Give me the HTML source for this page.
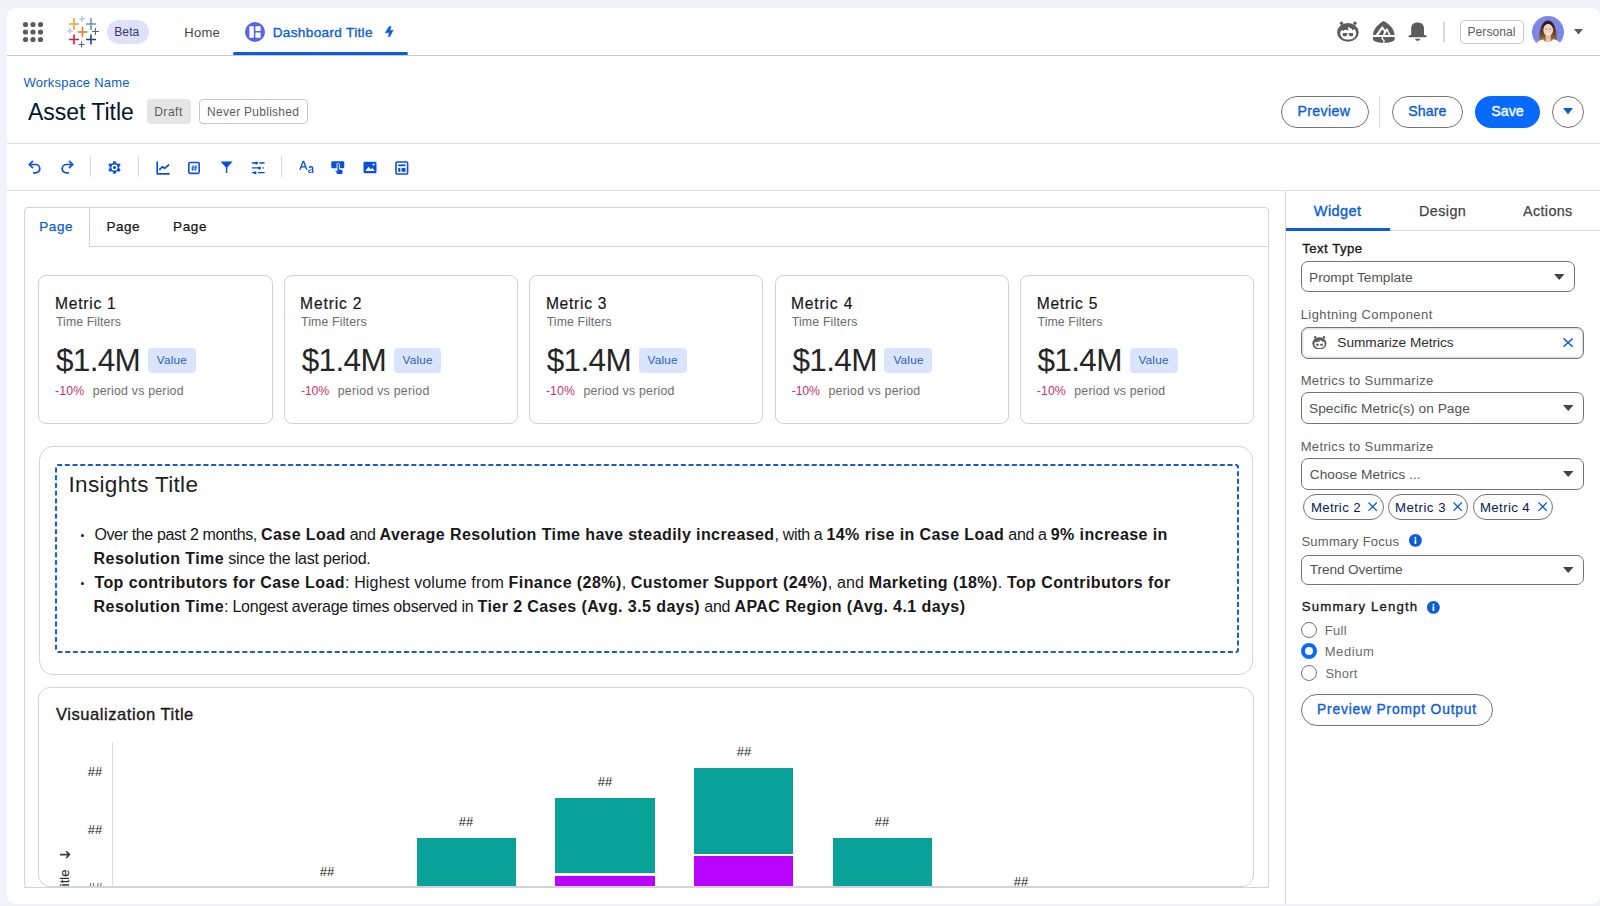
<!DOCTYPE html>
<html><head><meta charset="utf-8">
<style>
*{box-sizing:border-box;margin:0;padding:0}
html,body{width:1600px;height:906px;overflow:hidden;background:#f1f2fb;font-family:"Liberation Sans",sans-serif;color:#181818}
.abs{position:absolute}
.t{position:absolute;white-space:nowrap;line-height:1}
b{font-weight:bold}
</style></head><body>
<div class="abs" style="left:7px;top:8px;width:1592.5px;height:896px;background:#fff;border-radius:9px"></div>
<div class="abs" style="left:7px;top:55px;width:1593px;height:1.2px;background:#c9c9c9"></div>
<div class="abs" style="left:7px;top:142.5px;width:1593px;height:1.5px;background:#e0e0e0"></div>
<div class="abs" style="left:7px;top:189.5px;width:1593px;height:1.5px;background:#e0e0e0"></div>
<svg class="abs" style="left:20px;top:19px" width="26" height="26" viewBox="0 0 26 26" fill="#5c5c5c">
<circle cx="5.5" cy="5.5" r="2.6"/><circle cx="13" cy="5.5" r="2.6"/><circle cx="20.5" cy="5.5" r="2.6"/>
<circle cx="5.5" cy="13" r="2.6"/><circle cx="13" cy="13" r="2.6"/><circle cx="20.5" cy="13" r="2.6"/>
<circle cx="5.5" cy="20.5" r="2.6"/><circle cx="13" cy="20.5" r="2.6"/><circle cx="20.5" cy="20.5" r="2.6"/>
</svg>
<svg class="abs" style="left:62px;top:12px" width="40" height="40" viewBox="62 12 40 40">
<path d="M74 18v12M69 24h10" stroke="#e8a33a" stroke-width="1.6"/>
<path d="M82 16v6M79 19h6" stroke="#9ebfc6" stroke-width="1.05"/>
<path d="M91 18v12M86 24h10" stroke="#6c95a6" stroke-width="1.6"/>
<path d="M70 28v6M67 31h6" stroke="#a6c6cc" stroke-width="1.05"/>
<path d="M82.5 27v10M77.5 32h10" stroke="#e8762d" stroke-width="1.6"/>
<path d="M95.5 28v7M92 31.5h7" stroke="#5b5e96" stroke-width="1.05"/>
<path d="M74 34.5v10M69 39.5h10" stroke="#d2203c" stroke-width="1.6"/>
<path d="M91 34.5v10M86 39.5h10" stroke="#1f457e" stroke-width="1.6"/>
<path d="M81.5 41.5v6M78.5 44.5h6" stroke="#5b5e96" stroke-width="1.05"/>
</svg>
<div class="abs" style="left:106.5px;top:20px;width:42px;height:24px;border-radius:12px;background:#dfe3f8"></div>
<div id="beta" class="t" style="left:114.20px;top:26.34px;font-size:12px;color:#3b2f7e;font-weight:normal;letter-spacing:0.133px;">Beta</div>
<div id="home" class="t" style="left:184.32px;top:25.80px;font-size:13px;color:#444;font-weight:normal;letter-spacing:0.267px;">Home</div>
<svg class="abs" style="left:245px;top:22px" width="20" height="20" viewBox="0 0 20 20">
<circle cx="10" cy="10" r="10" fill="#5867e8"/>
<rect x="4.4" y="4.2" width="4.4" height="11.6" rx="0.6" fill="#fff"/>
<rect x="10.4" y="4.2" width="5.3" height="4.7" rx="0.6" fill="#fff"/>
<rect x="10.4" y="10.5" width="5.3" height="5.3" rx="0.6" fill="#fff"/>
</svg>
<div id="dash" class="t" style="left:272.70px;top:25.79px;font-size:13.6px;color:#0b5cd5;font-weight:normal;letter-spacing:0.329px;-webkit-text-stroke:0.35px currentColor">Dashboard Title</div>
<svg class="abs" style="left:384px;top:25px" width="10" height="13" viewBox="384 25 10 13"><path d="M389.2 26.6h1.9l-1.2 3.7h3.3l-3.7 6.7h-1l.8-4.2h-4.1z" fill="#0b5cd5" stroke="#0b5cd5" stroke-width="0.5" stroke-linejoin="round"/></svg>
<div class="abs" style="left:233px;top:51.7px;width:175px;height:3.3px;border-radius:2px;background:#0b5cd5"></div>
<svg class="abs" style="left:1334px;top:18px" width="28" height="28" viewBox="0 0 28 28">
<ellipse cx="13.9" cy="14.45" rx="10.8" ry="9.35" fill="#5c5c5c"/>
<circle cx="7.5" cy="5.2" r="1.7" fill="#5c5c5c"/><circle cx="20.9" cy="5.2" r="1.7" fill="#5c5c5c"/>
<path d="M6.3 15.5C6.3 13.5 7 12.3 8.3 12L9.4 13C10.5 11.6 12.5 11.3 14.6 12.6 14.6 11.2 14.2 10 13.8 9 16.5 9.6 18 11 18.6 12.4 19.4 11.6 20 11 20.6 11.2 21.6 12.5 22.1 14 22.1 15.5 22.1 19.3 18.6 21.6 14.2 21.6S6.3 19.3 6.3 15.5z" fill="#fff"/>
<rect x="8.65" y="15.1" width="4.35" height="3.1" rx="1.1" fill="#5c5c5c"/><rect x="15.1" y="15.1" width="4.1" height="3.1" rx="1.1" fill="#5c5c5c"/>
<path d="M12.5 15.9h3" stroke="#5c5c5c" stroke-width="0.6"/>
</svg>
<svg class="abs" style="left:1368px;top:16px" width="32" height="30" viewBox="0 0 32 30">
<path d="M15.7 4.9C10.5 7.5 5.3 12.5 5 18.9h21.6C26.2 12.5 21 7.5 15.7 4.9z" fill="#5c5c5c"/>
<path d="M5 20.9h21.7v2.6C26.2 25.5 21 26.9 15.8 26.9S5.4 25.5 5 23.5z" fill="#5c5c5c"/>
<path d="M7.6 18.9L14.2 10.1 17.2 14.1 19 11.9 22.6 18.9z" fill="#fff"/>
<path d="M10.6 18.9L14.2 13.3 16.1 15.6 14.9 18.9z" fill="#5c5c5c"/>
<path d="M16.8 18.9L19 15.1 20.7 18.9z" fill="#5c5c5c"/>
<path d="M14.6 20.6l-.4 2 1.8 2-.1 2.6" fill="none" stroke="#fff" stroke-width="1.3"/>
</svg>
<svg class="abs" style="left:1408px;top:21px" width="20" height="21" viewBox="0 0 20 21">
<path d="M3.2 13.8V7.6C3.2 3.6 5.8 1.6 9.6 1.6S16 3.6 16 7.6v6.2l2.6 1v1.5H0.6v-1.5z" fill="#5c5c5c"/>
<path d="M7 17.8h5.2c-.4 1.4-1.3 2-2.6 2s-2.2-.6-2.6-2z" fill="#5c5c5c"/>
</svg>
<div class="abs" style="left:1443.3px;top:22.2px;width:1.5px;height:19.5px;background:#d8d8d8"></div>
<div class="abs" style="left:1459.6px;top:19.6px;width:64px;height:24.5px;border:1px solid #c9c9c9;border-radius:4px"></div>
<div id="personal" class="t" style="left:1467.54px;top:26.44px;font-size:12px;color:#5c5c5c;font-weight:normal;letter-spacing:0.069px;">Personal</div>
<svg class="abs" style="left:1532px;top:15.8px" width="32" height="32" viewBox="0 0 32 32">
<defs><clipPath id="av"><circle cx="16" cy="16" r="16"/></clipPath>
<linearGradient id="hg" x1="0" y1="0" x2="0" y2="1"><stop offset="0" stop-color="#2e1e14"/><stop offset="0.55" stop-color="#6b4428"/><stop offset="1" stop-color="#c08a55"/></linearGradient></defs>
<g clip-path="url(#av)">
<rect width="32" height="32" fill="#7b88e8"/>
<path d="M7.4 28C6.8 18 8 4.8 16 4.4 24 4.8 25.2 18 24.6 28z" fill="url(#hg)"/>
<path d="M13.6 18.5h5.2v8h-5.2z" fill="#e8c0a3"/>
<ellipse cx="16.2" cy="13.9" rx="4.9" ry="6.1" fill="#f0d3c0"/>
<path d="M11.1 13.2C11 7.2 13.4 5.4 16.2 5.4S21.4 7.2 21.3 13.2C20.6 9.4 18.6 7.9 16.2 7.9S11.8 9.4 11.1 13.2z" fill="#2e1e14"/>
<circle cx="14.2" cy="13.1" r="0.6" fill="#4a3a33"/><circle cx="18.2" cy="13.1" r="0.6" fill="#4a3a33"/>
<path d="M14.3 16.8c1.1.9 2.8.9 3.9 0-.3 1.3-1.1 1.8-1.95 1.8s-1.65-.5-1.95-1.8z" fill="#fff"/>
</g>
<path d="M1 34C2 27 6.5 24.2 11.5 23.4c1.5 3.6 7.5 3.6 9.4-.2 4.6.7 9 3 10.1 10.8z" fill="#fcfcfc"/>
</svg>
<svg class="abs" style="left:1573.5px;top:28.8px" width="9" height="6" viewBox="0 0 9 6"><path d="M0 0h9L4.5 5.6z" fill="#5c5c5c"/></svg>
<div id="ws" class="t" style="left:23.44px;top:75.50px;font-size:13px;color:#0b5cd5;font-weight:normal;letter-spacing:0.234px;">Workspace Name</div>
<div id="asset" class="t" style="left:27.90px;top:101.13px;font-size:23px;color:#03152b;font-weight:normal;letter-spacing:-0.016px;">Asset Title</div>
<div class="abs" style="left:146.8px;top:99.3px;width:44px;height:24.4px;background:#e5e5e5;border-radius:4px"></div>
<div id="draft" class="t" style="left:154.20px;top:105.84px;font-size:12px;color:#5c5c5c;font-weight:normal;letter-spacing:0.520px;">Draft</div>
<div class="abs" style="left:199.3px;top:99.3px;width:108.3px;height:24.4px;border:1px solid #c9c9c9;border-radius:4px"></div>
<div id="never" class="t" style="left:207.10px;top:105.84px;font-size:12px;color:#5c5c5c;font-weight:normal;letter-spacing:0.269px;">Never Published</div>
<div class="abs" style="left:1281px;top:96px;width:87.5px;height:31.5px;border:1px solid #747474;border-radius:16px"></div>
<div id="preview" class="t" style="left:1297.56px;top:103.68px;font-size:14.2px;color:#0b5cd5;font-weight:normal;letter-spacing:0.313px;-webkit-text-stroke:0.35px currentColor">Preview</div>
<div class="abs" style="left:1379.3px;top:96px;width:1px;height:31.5px;background:#dcdcdc"></div>
<div class="abs" style="left:1391.8px;top:96px;width:71.5px;height:31.5px;border:1px solid #747474;border-radius:16px"></div>
<div id="share" class="t" style="left:1408.14px;top:103.68px;font-size:14.2px;color:#0b5cd5;font-weight:normal;letter-spacing:0.120px;-webkit-text-stroke:0.35px currentColor">Share</div>
<div class="abs" style="left:1475px;top:96px;width:65px;height:31.5px;background:#066afe;border-radius:16px"></div>
<div id="save" class="t" style="left:1491.28px;top:103.68px;font-size:14.2px;color:#fff;font-weight:normal;letter-spacing:0.007px;-webkit-text-stroke:0.35px currentColor">Save</div>
<div class="abs" style="left:1551.8px;top:96px;width:32.2px;height:31.5px;border:1px solid #747474;border-radius:16px"></div>
<svg class="abs" style="left:1562.7px;top:108.2px" width="10" height="7" viewBox="0 0 10 7"><path d="M0 0h10L5 6.6z" fill="#0b5cd5"/></svg>
<svg class="abs" style="left:28px;top:160px" width="14" height="14" viewBox="0 0 14 14" fill="none" stroke="#0b50d8" stroke-width="1.7" stroke-linecap="round" stroke-linejoin="round">
<path d="M4.5 1.3L1.3 4.5 4.5 7.7"/><path d="M1.6 4.5h6a4.2 4.2 0 0 1 0 8.4H5.8"/></svg>
<svg class="abs" style="left:59.5px;top:160px" width="14" height="14" viewBox="0 0 14 14" fill="none" stroke="#0b50d8" stroke-width="1.7" stroke-linecap="round" stroke-linejoin="round">
<path d="M9.5 1.3l3.2 3.2-3.2 3.2"/><path d="M12.4 4.5h-6a4.2 4.2 0 0 0 0 8.4h1.8"/></svg>
<svg class="abs" style="left:108px;top:160.8px" width="13" height="13" viewBox="0 0 13 13">
<path d="M4.55 2.67 L5.84 0.23 L7.16 0.23 L8.45 2.67 L8.84 2.89 L11.60 2.80 L12.26 3.94 L10.79 6.27 L10.79 6.73 L12.26 9.06 L11.60 10.20 L8.84 10.11 L8.45 10.33 L7.16 12.77 L5.84 12.77 L4.55 10.33 L4.16 10.11 L1.40 10.20 L0.74 9.06 L2.21 6.73 L2.21 6.27 L0.74 3.94 L1.40 2.80 L4.16 2.89Z" fill="#0b50d8" stroke="#0b50d8" stroke-width="0.5" stroke-linejoin="round"/>
<circle cx="6.5" cy="6.5" r="3.1" fill="#fff"/><circle cx="6.5" cy="6.5" r="1.6" fill="#0b50d8"/></svg>
<svg class="abs" style="left:155.5px;top:160.5px" width="14" height="14" viewBox="0 0 14 14" fill="none" stroke="#0b50d8" stroke-width="1.7" stroke-linecap="round" stroke-linejoin="round">
<path d="M1.2 1v11.8h11.8"/><path d="M3.8 8.3l2.8-2.6 2 1.6 4-3.3"/></svg>
<svg class="abs" style="left:187px;top:160.5px" width="14" height="14" viewBox="0 0 14 14">
<rect x="1.8" y="1.5" width="10.4" height="10.9" rx="1.3" fill="none" stroke="#0b50d8" stroke-width="1.6"/>
<path d="M6.3 4.1L5.3 10M9.1 4.1L8.1 10M4.6 6.1h5.6M4.2 8.1h5.6" stroke="#0b50d8" stroke-width="0.9"/></svg>
<svg class="abs" style="left:219.5px;top:161px" width="13" height="13" viewBox="0 0 13 13">
<path d="M0.5 0.6h12.2L7.3 6.6v5.4H5.9V6.6z" fill="#0b50d8"/></svg>
<svg class="abs" style="left:251px;top:160.5px" width="14" height="14" viewBox="0 0 14 14" stroke="#0b50d8" stroke-width="1.3" stroke-linecap="round">
<path d="M1.4 2h4.5M8.8 2h4.3M1.4 6.9h7.5M12 6.9h.4M1.4 11.7h2.8M7.4 11.7h5.7"/>
<circle cx="5.5" cy="2" r="1.5" fill="#0b50d8" stroke="none"/><circle cx="8.5" cy="6.9" r="1.5" fill="#0b50d8" stroke="none"/><circle cx="4.1" cy="11.7" r="1.5" fill="#0b50d8" stroke="none"/></svg>
<svg class="abs" style="left:299px;top:160px" width="15" height="15" viewBox="0 0 15 15" fill="#0b50d8">
<path d="M0.2 9.8L3.6 0.8h1.6l3.4 9H7.1L6.2 7.4H2.6L1.7 9.8zM3 6.2h2.8L4.4 2.4z"/>
<path d="M9.6 7.3c.5-.9 1.3-1.3 2.3-1.3 1.5 0 2.4.8 2.4 2.2v4.7H13v-.8c-.4.7-1.1 1-1.9 1-1.2 0-2-.7-2-1.8 0-1.2.9-1.8 2.5-1.9l1.4-.1v-.4c0-.8-.5-1.3-1.2-1.3-.6 0-1 .3-1.3.8zm3.4 2.8l-1.2.1c-.9.1-1.4.4-1.4 1 0 .5.4.9 1 .9.9 0 1.6-.6 1.6-1.4z"/></svg>
<svg class="abs" style="left:331px;top:160.5px" width="14" height="14" viewBox="0 0 14 14">
<rect x="0.3" y="0.3" width="13" height="7" rx="1.3" fill="#0b50d8"/>
<path d="M6 3.5a1.2 1.2 0 0 1 2.4 0v4.5l2.6.6c.8.2 1.2.9 1.1 1.7l-.5 3.2H6.2L4.2 10.3c-.4-.6.4-1.4 1-.9l.8.7z" fill="#0b50d8" stroke="#fff" stroke-width="0.9"/></svg>
<svg class="abs" style="left:362.5px;top:161px" width="14" height="13" viewBox="0 0 14 13">
<rect x="0.5" y="0.8" width="13" height="11.4" rx="1.2" fill="#0b50d8"/>
<path d="M2.3 10l3.2-4.2 2.2 2.6 1.5-1.6 2.6 3.2z" fill="#fff"/><circle cx="10.6" cy="3.5" r="1.1" fill="#fff"/></svg>
<svg class="abs" style="left:394.5px;top:160.5px" width="14" height="14" viewBox="0 0 14 14">
<rect x="1" y="1" width="11.6" height="12" rx="1" fill="none" stroke="#0b50d8" stroke-width="1.6"/>
<rect x="3.2" y="3.4" width="7.3" height="1.8" fill="#0b50d8"/><rect x="3.2" y="7" width="2.2" height="3.8" fill="#0b50d8"/><rect x="6.6" y="7" width="3.9" height="3.8" fill="#0b50d8"/></svg>
<div class="abs" style="left:90px;top:157px;width:1.3px;height:20px;background:#d6d6d6"></div>
<div class="abs" style="left:137.5px;top:157px;width:1.3px;height:20px;background:#d6d6d6"></div>
<div class="abs" style="left:281px;top:157px;width:1.3px;height:20px;background:#d6d6d6"></div>
<div class="abs" style="left:23.5px;top:207.3px;width:1245.5px;height:681px;border:1px solid #d4d4d4;border-radius:4px"></div>
<div class="abs" style="left:88.6px;top:207.5px;width:1px;height:39.5px;background:#d4d4d4"></div>
<div class="abs" style="left:88.6px;top:246px;width:1180px;height:1px;background:#d4d4d4"></div>
<div id="pg1" class="t" style="left:39.20px;top:219.82px;font-size:13.5px;color:#0b5cd5;font-weight:normal;letter-spacing:0.600px;-webkit-text-stroke:0.25px currentColor">Page</div>
<div id="pg2" class="t" style="left:106.54px;top:219.82px;font-size:13.5px;color:#181818;font-weight:normal;letter-spacing:0.507px;-webkit-text-stroke:0.25px currentColor">Page</div>
<div id="pg3" class="t" style="left:173.10px;top:219.82px;font-size:13.5px;color:#181818;font-weight:normal;letter-spacing:0.600px;-webkit-text-stroke:0.25px currentColor">Page</div>
<div class="abs" style="left:38.4px;top:275.2px;width:234.3px;height:149px;border:1px solid #d2d2d2;border-radius:8px"></div>
<div id="m0" class="t" style="left:55.10px;top:295.79px;font-size:15.6px;color:#181818;font-weight:normal;letter-spacing:0.743px;-webkit-text-stroke:0.2px currentColor">Metric 1</div>
<div id="tf0" class="t" style="left:55.90px;top:316.29px;font-size:12.3px;color:#6b6b6b;font-weight:normal;letter-spacing:0.109px;">Time Filters</div>
<div id="v0" class="t" style="left:55.88px;top:345.34px;font-size:31.5px;color:#262626;font-weight:normal;letter-spacing:-0.640px;">$1.4M</div>
<div class="abs" style="left:148.2px;top:348px;width:47.8px;height:25px;border-radius:4px;background:#d9e5fd"></div>
<div id="val0" class="t" style="left:156.78px;top:355.31px;font-size:11.8px;color:#2b62b8;font-weight:normal;letter-spacing:0.200px;">Value</div>
<div id="pct0" class="t" style="left:55.10px;top:384.59px;font-size:12.3px;color:#c2336c;font-weight:normal;letter-spacing:0.133px;">-10%</div>
<div id="pvp0" class="t" style="left:92.66px;top:384.59px;font-size:12.3px;color:#6e6e6e;font-weight:normal;letter-spacing:0.224px;">period vs period</div>
<div class="abs" style="left:283.8px;top:275.2px;width:234.3px;height:149px;border:1px solid #d2d2d2;border-radius:8px"></div>
<div id="m1" class="t" style="left:300.10px;top:295.79px;font-size:15.6px;color:#181818;font-weight:normal;letter-spacing:0.857px;-webkit-text-stroke:0.2px currentColor">Metric 2</div>
<div id="tf1" class="t" style="left:300.90px;top:316.29px;font-size:12.3px;color:#6b6b6b;font-weight:normal;letter-spacing:0.182px;">Time Filters</div>
<div id="v1" class="t" style="left:301.68px;top:345.34px;font-size:31.5px;color:#262626;font-weight:normal;letter-spacing:-0.640px;">$1.4M</div>
<div class="abs" style="left:393.6px;top:348px;width:47.8px;height:25px;border-radius:4px;background:#d9e5fd"></div>
<div id="val1" class="t" style="left:402.58px;top:355.31px;font-size:11.8px;color:#2b62b8;font-weight:normal;letter-spacing:0.200px;">Value</div>
<div id="pct1" class="t" style="left:300.90px;top:384.59px;font-size:12.3px;color:#c2336c;font-weight:normal;letter-spacing:-0.133px;">-10%</div>
<div id="pvp1" class="t" style="left:337.66px;top:384.59px;font-size:12.3px;color:#6e6e6e;font-weight:normal;letter-spacing:0.277px;">period vs period</div>
<div class="abs" style="left:529.2px;top:275.2px;width:234.3px;height:149px;border:1px solid #d2d2d2;border-radius:8px"></div>
<div id="m2" class="t" style="left:545.90px;top:295.79px;font-size:15.6px;color:#181818;font-weight:normal;letter-spacing:0.743px;-webkit-text-stroke:0.2px currentColor">Metric 3</div>
<div id="tf2" class="t" style="left:546.70px;top:316.29px;font-size:12.3px;color:#6b6b6b;font-weight:normal;letter-spacing:0.109px;">Time Filters</div>
<div id="v2" class="t" style="left:546.68px;top:345.34px;font-size:31.5px;color:#262626;font-weight:normal;letter-spacing:-0.640px;">$1.4M</div>
<div class="abs" style="left:639.0px;top:348px;width:47.8px;height:25px;border-radius:4px;background:#d9e5fd"></div>
<div id="val2" class="t" style="left:647.58px;top:355.31px;font-size:11.8px;color:#2b62b8;font-weight:normal;letter-spacing:0.200px;">Value</div>
<div id="pct2" class="t" style="left:545.90px;top:384.59px;font-size:12.3px;color:#c2336c;font-weight:normal;letter-spacing:0.133px;">-10%</div>
<div id="pvp2" class="t" style="left:583.46px;top:384.59px;font-size:12.3px;color:#6e6e6e;font-weight:normal;letter-spacing:0.224px;">period vs period</div>
<div class="abs" style="left:774.6px;top:275.2px;width:234.3px;height:149px;border:1px solid #d2d2d2;border-radius:8px"></div>
<div id="m3" class="t" style="left:790.90px;top:295.79px;font-size:15.6px;color:#181818;font-weight:normal;letter-spacing:0.857px;-webkit-text-stroke:0.2px currentColor">Metric 4</div>
<div id="tf3" class="t" style="left:791.70px;top:316.29px;font-size:12.3px;color:#6b6b6b;font-weight:normal;letter-spacing:0.182px;">Time Filters</div>
<div id="v3" class="t" style="left:792.48px;top:345.34px;font-size:31.5px;color:#262626;font-weight:normal;letter-spacing:-0.640px;">$1.4M</div>
<div class="abs" style="left:884.4px;top:348px;width:47.8px;height:25px;border-radius:4px;background:#d9e5fd"></div>
<div id="val3" class="t" style="left:893.38px;top:355.31px;font-size:11.8px;color:#2b62b8;font-weight:normal;letter-spacing:0.200px;">Value</div>
<div id="pct3" class="t" style="left:791.70px;top:384.59px;font-size:12.3px;color:#c2336c;font-weight:normal;letter-spacing:-0.133px;">-10%</div>
<div id="pvp3" class="t" style="left:828.46px;top:384.59px;font-size:12.3px;color:#6e6e6e;font-weight:normal;letter-spacing:0.277px;">period vs period</div>
<div class="abs" style="left:1020.0px;top:275.2px;width:234.3px;height:149px;border:1px solid #d2d2d2;border-radius:8px"></div>
<div id="m4" class="t" style="left:1036.70px;top:295.79px;font-size:15.6px;color:#181818;font-weight:normal;letter-spacing:0.743px;-webkit-text-stroke:0.2px currentColor">Metric 5</div>
<div id="tf4" class="t" style="left:1037.50px;top:316.29px;font-size:12.3px;color:#6b6b6b;font-weight:normal;letter-spacing:0.109px;">Time Filters</div>
<div id="v4" class="t" style="left:1037.48px;top:345.34px;font-size:31.5px;color:#262626;font-weight:normal;letter-spacing:-0.640px;">$1.4M</div>
<div class="abs" style="left:1129.8px;top:348px;width:47.8px;height:25px;border-radius:4px;background:#d9e5fd"></div>
<div id="val4" class="t" style="left:1138.38px;top:355.31px;font-size:11.8px;color:#2b62b8;font-weight:normal;letter-spacing:0.200px;">Value</div>
<div id="pct4" class="t" style="left:1036.70px;top:384.59px;font-size:12.3px;color:#c2336c;font-weight:normal;letter-spacing:0.133px;">-10%</div>
<div id="pvp4" class="t" style="left:1074.26px;top:384.59px;font-size:12.3px;color:#6e6e6e;font-weight:normal;letter-spacing:0.224px;">period vs period</div>
<div class="abs" style="left:39.4px;top:445.6px;width:1213.6px;height:229.4px;border:1px solid #d4d4d4;border-radius:14px"></div>
<svg class="abs" style="left:55px;top:464px" width="1184" height="189"><rect x="1" y="1" width="1182" height="187" rx="2" fill="none" stroke="#1a5fc0" stroke-width="2.1" stroke-dasharray="3.3 4.4" stroke-linecap="round"/></svg>
<div id="ins" class="t" style="left:68.50px;top:473.95px;font-size:22.5px;color:#222;font-weight:normal;letter-spacing:0.338px;">Insights Title</div>
<div class="abs" style="left:80.5px;top:534px;width:3px;height:3px;border-radius:50%;background:#181818"></div>
<div class="abs" style="left:80.5px;top:582px;width:3px;height:3px;border-radius:50%;background:#181818"></div>
<div id="l1" class="t" style="left:94.40px;top:526.76px;font-size:16px;color:#181818;font-weight:normal;letter-spacing:-0.357px;">Over the past 2 months, <b style="letter-spacing:0.42px">Case Load</b> and <b style="letter-spacing:0.42px">Average Resolution Time have steadily increased</b>, with a <b style="letter-spacing:0.42px">14% rise in Case Load</b> and a <b style="letter-spacing:0.42px">9% increase in</b></div>
<div id="l2" class="t" style="left:93.60px;top:550.76px;font-size:16px;color:#181818;font-weight:normal;letter-spacing:-0.204px;"><b style="letter-spacing:0.42px">Resolution Time</b> since the last period.</div>
<div id="l3" class="t" style="left:94.40px;top:574.76px;font-size:16px;color:#181818;font-weight:normal;letter-spacing:0.164px;"><b style="letter-spacing:0.42px">Top contributors for Case Load</b>: Highest volume from <b style="letter-spacing:0.42px">Finance (28%)</b>, <b style="letter-spacing:0.42px">Customer Support (24%)</b>, and <b style="letter-spacing:0.42px">Marketing (18%)</b>. <b style="letter-spacing:0.42px">Top Contributors for</b></div>
<div id="l4" class="t" style="left:93.60px;top:598.76px;font-size:16px;color:#181818;font-weight:normal;letter-spacing:-0.247px;"><b style="letter-spacing:0.42px">Resolution Time</b>: Longest average times observed in <b style="letter-spacing:0.42px">Tier 2 Cases (Avg. 3.5 days)</b> and <b style="letter-spacing:0.42px">APAC Region (Avg. 4.1 days)</b></div>
<div class="abs" style="left:37.8px;top:687px;width:1216.7px;height:200px;border:1px solid #d4d4d4;border-radius:12px"></div>
<div id="viz" class="t" style="left:56.06px;top:707.45px;font-size:16.6px;color:#181818;font-weight:normal;letter-spacing:0.522px;-webkit-text-stroke:0.35px currentColor">Visualization Title</div>
<div class="abs" style="left:39.5px;top:688px;width:1213.5px;height:198px;overflow:hidden;border-radius:0 0 11px 11px">
<div class="abs" style="left:72.0px;top:54px;width:1.2px;height:150px;background:#dddddd"></div>
<div class="abs" style="left:377.0px;top:149.70000000000005px;width:99.5px;height:62.299999999999955px;background:#0aa199"></div>
<div class="abs" style="left:515.8000000000001px;top:109.79999999999995px;width:99.5px;height:75.70000000000005px;background:#0aa199"></div>
<div class="abs" style="left:515.8000000000001px;top:187.70000000000005px;width:99.5px;height:24.299999999999955px;background:#b804ff"></div>
<div class="abs" style="left:654.2px;top:80px;width:99.5px;height:85.5px;background:#0aa199"></div>
<div class="abs" style="left:654.2px;top:168px;width:99.5px;height:44px;background:#b804ff"></div>
<div class="abs" style="left:793.4000000000001px;top:150px;width:99.5px;height:62px;background:#0aa199"></div>
<div class="t" style="left:43.5px;top:76.5px;width:24px;text-align:center;font-size:13px;color:#222">##</div>
<div class="t" style="left:43.5px;top:134.5px;width:24px;text-align:center;font-size:13px;color:#222">##</div>
<div class="t" style="left:43.5px;top:193.0px;width:24px;text-align:center;font-size:13px;color:#222">##</div>
<div class="t" style="left:275.5px;top:176.5px;width:24px;text-align:center;font-size:13px;color:#222">##</div>
<div class="t" style="left:414.5px;top:126.5px;width:24px;text-align:center;font-size:13px;color:#222">##</div>
<div class="t" style="left:553.5px;top:86.5px;width:24px;text-align:center;font-size:13px;color:#222">##</div>
<div class="t" style="left:692.5px;top:56.5px;width:24px;text-align:center;font-size:13px;color:#222">##</div>
<div class="t" style="left:830.5px;top:126.5px;width:24px;text-align:center;font-size:13px;color:#222">##</div>
<div class="t" style="left:969.5px;top:186.5px;width:24px;text-align:center;font-size:13px;color:#222">##</div>
<svg class="abs" style="left:19px;top:158px" width="14" height="50" viewBox="0 0 14 50">
<path d="M1 8.6h9.5M7.1 5.2L10.5 8.6 7.1 12" fill="none" stroke="#3a3a3a" stroke-width="1.6"/>
<text x="0" y="0" transform="translate(10.2 47.6) rotate(-90)" font-size="13" font-family="Liberation Sans" fill="#333" stroke="#333" stroke-width="0.12">Title</text>
</svg>
</div>
<div class="abs" style="left:23.5px;top:887.3px;width:1245.5px;height:1px;background:#d4d4d4"></div>
<div class="abs" style="left:1285px;top:190.5px;width:1px;height:713.5px;background:#d4d4d4"></div>
<div class="abs" style="left:1286px;top:230px;width:314px;height:1px;background:#d9d9d9"></div>
<div class="abs" style="left:1286px;top:228.2px;width:104px;height:2.8px;background:#0b5cd5"></div>
<div id="tw" class="t" style="left:1313.86px;top:203.84px;font-size:14.6px;color:#0b5cd5;font-weight:normal;letter-spacing:0.364px;-webkit-text-stroke:0.35px currentColor">Widget</div>
<div id="td" class="t" style="left:1419.00px;top:204.01px;font-size:14.4px;color:#444;font-weight:normal;letter-spacing:0.400px;-webkit-text-stroke:0.25px currentColor">Design</div>
<div id="ta" class="t" style="left:1523.02px;top:204.01px;font-size:14.4px;color:#444;font-weight:normal;letter-spacing:0.347px;-webkit-text-stroke:0.25px currentColor">Actions</div>
<div id="lt" class="t" style="left:1302.22px;top:241.83px;font-size:13.2px;color:#181818;font-weight:normal;letter-spacing:0.460px;-webkit-text-stroke:0.35px currentColor">Text Type</div>
<div class="abs" style="left:1301.2px;top:261.2px;width:273.70000000000005px;height:31.30000000000001px;border:1px solid #747474;border-radius:7px"></div>
<div id="s1" class="t" style="left:1308.98px;top:271.00px;font-size:13.7px;color:#525252;font-weight:normal;letter-spacing:0.034px;">Prompt Template</div>
<svg class="abs" style="left:1554.4px;top:273.55px" width="11" height="7" viewBox="0 0 11 7"><path d="M0 0h10.5L5.25 6z" fill="#444"/></svg>
<div id="llc" class="t" style="left:1300.64px;top:308.20px;font-size:13px;color:#5c5c5c;font-weight:normal;letter-spacing:0.449px;">Lightning Component</div>
<div class="abs" style="left:1301.2px;top:326.9px;width:282.4px;height:31.7px;border:1px solid #747474;border-radius:7px;box-shadow:inset 0 0 0 1.5px #e3e3e3"></div>
<svg class="abs" style="left:1311.8px;top:335.6px" width="14.8" height="13.6" viewBox="2.6 3.2 22.6 20.8">
<ellipse cx="13.9" cy="14.45" rx="10.8" ry="9.35" fill="#5c5c5c"/>
<circle cx="7.5" cy="5.2" r="1.9" fill="#5c5c5c"/><circle cx="20.9" cy="5.2" r="1.9" fill="#5c5c5c"/>
<path d="M6.3 15.5C6.3 13.5 7 12.3 8.3 12L9.4 13C10.5 11.6 12.5 11.3 14.6 12.6 14.6 11.2 14.2 10 13.8 9 16.5 9.6 18 11 18.6 12.4 19.4 11.6 20 11 20.6 11.2 21.6 12.5 22.1 14 22.1 15.5 22.1 19.3 18.6 21.6 14.2 21.6S6.3 19.3 6.3 15.5z" fill="#fff"/>
<rect x="8.65" y="15.1" width="4.35" height="3.1" rx="1.1" fill="#5c5c5c"/><rect x="15.1" y="15.1" width="4.1" height="3.1" rx="1.1" fill="#5c5c5c"/>
</svg>
<div id="sm" class="t" style="left:1337.32px;top:336.30px;font-size:13.7px;color:#2e2e2e;font-weight:normal;letter-spacing:-0.045px;">Summarize Metrics</div>
<svg class="abs" style="left:1562.9px;top:338.1px" width="10.3" height="9.2" viewBox="0 0 10.3 9.2"><path d="M0.5 0.4l9.3 8.4M9.8 0.4L0.5 8.8" stroke="#0b5cd5" stroke-width="1.4"/></svg>
<div id="lm1" class="t" style="left:1300.64px;top:374.20px;font-size:13px;color:#5c5c5c;font-weight:normal;letter-spacing:0.366px;">Metrics to Summarize</div>
<div class="abs" style="left:1301.2px;top:392.3px;width:282.5999999999999px;height:31.69999999999999px;border:1px solid #747474;border-radius:7px"></div>
<div id="s2" class="t" style="left:1308.98px;top:402.10px;font-size:13.7px;color:#525252;font-weight:normal;letter-spacing:0.042px;">Specific Metric(s) on Page</div>
<svg class="abs" style="left:1563.3px;top:404.84999999999997px" width="11" height="7" viewBox="0 0 11 7"><path d="M0 0h10.5L5.25 6z" fill="#444"/></svg>
<div id="lm2" class="t" style="left:1300.64px;top:439.70px;font-size:13px;color:#5c5c5c;font-weight:normal;letter-spacing:0.366px;">Metrics to Summarize</div>
<div class="abs" style="left:1301.2px;top:458.3px;width:282.5999999999999px;height:31.5px;border:1px solid #747474;border-radius:7px"></div>
<div id="s3" class="t" style="left:1309.78px;top:468.00px;font-size:13.7px;color:#525252;font-weight:normal;letter-spacing:0.033px;">Choose Metrics ...</div>
<svg class="abs" style="left:1563.3px;top:470.75px" width="11" height="7" viewBox="0 0 11 7"><path d="M0 0h10.5L5.25 6z" fill="#444"/></svg>
<div class="abs" style="left:1303.4px;top:494.4px;width:80.2px;height:25.3px;border:1px solid #747474;border-radius:13px"></div>
<div id="pl0" class="t" style="left:1310.88px;top:500.93px;font-size:13.2px;color:#03234d;font-weight:normal;letter-spacing:0.400px;">Metric 2</div>
<svg class="abs" style="left:1368.3000000000002px;top:502.2px" width="9.4" height="9.4" viewBox="0 0 9.4 9.4"><path d="M0.5 0.5l8.4 8.4M8.9 0.5L0.5 8.9" stroke="#0b5cd5" stroke-width="1.3"/></svg>
<div class="abs" style="left:1387.9px;top:494.4px;width:80.2px;height:25.3px;border:1px solid #747474;border-radius:13px"></div>
<div id="pl1" class="t" style="left:1394.98px;top:500.93px;font-size:13.2px;color:#03234d;font-weight:normal;letter-spacing:0.514px;">Metric 3</div>
<svg class="abs" style="left:1452.8000000000002px;top:502.2px" width="9.4" height="9.4" viewBox="0 0 9.4 9.4"><path d="M0.5 0.5l8.4 8.4M8.9 0.5L0.5 8.9" stroke="#0b5cd5" stroke-width="1.3"/></svg>
<div class="abs" style="left:1472.9px;top:494.4px;width:80.2px;height:25.3px;border:1px solid #747474;border-radius:13px"></div>
<div id="pl2" class="t" style="left:1479.98px;top:500.93px;font-size:13.2px;color:#03234d;font-weight:normal;letter-spacing:0.400px;">Metric 4</div>
<svg class="abs" style="left:1537.8000000000002px;top:502.2px" width="9.4" height="9.4" viewBox="0 0 9.4 9.4"><path d="M0.5 0.5l8.4 8.4M8.9 0.5L0.5 8.9" stroke="#0b5cd5" stroke-width="1.3"/></svg>
<div id="lsf" class="t" style="left:1301.44px;top:534.90px;font-size:13px;color:#5c5c5c;font-weight:normal;letter-spacing:0.247px;">Summary Focus</div>
<svg class="abs" style="left:1409.3999999999999px;top:534.4px" width="12.8" height="12.8" viewBox="0 0 13 13"><circle cx="6.5" cy="6.5" r="6.5" fill="#0b5cd5"/><rect x="5.6" y="5.5" width="1.8" height="4.6" fill="#fff"/><circle cx="6.5" cy="3.7" r="1" fill="#fff"/></svg>
<div class="abs" style="left:1301.2px;top:554.5px;width:282.5999999999999px;height:30.700000000000045px;border:1px solid #747474;border-radius:7px"></div>
<div id="s4" class="t" style="left:1309.78px;top:563.20px;font-size:13.7px;color:#525252;font-weight:normal;letter-spacing:-0.123px;">Trend Overtime</div>
<svg class="abs" style="left:1563.3px;top:566.5500000000001px" width="11" height="7" viewBox="0 0 11 7"><path d="M0 0h10.5L5.25 6z" fill="#444"/></svg>
<div id="lsl" class="t" style="left:1301.86px;top:600.23px;font-size:13.2px;color:#181818;font-weight:normal;letter-spacing:1.137px;-webkit-text-stroke:0.35px currentColor">Summary Length</div>
<svg class="abs" style="left:1427.1px;top:600.9px" width="12.8" height="12.8" viewBox="0 0 13 13"><circle cx="6.5" cy="6.5" r="6.5" fill="#0b5cd5"/><rect x="5.6" y="5.5" width="1.8" height="4.6" fill="#fff"/><circle cx="6.5" cy="3.7" r="1" fill="#fff"/></svg>
<div class="abs" style="left:1301px;top:621.5px;width:16px;height:16px;border-radius:50%;border:1px solid #747474;background:#fff"></div>
<div id="rf" class="t" style="left:1324.64px;top:623.50px;font-size:13px;color:#6b6b6b;font-weight:normal;letter-spacing:0.320px;">Full</div>
<div class="abs" style="left:1301px;top:643.3px;width:16px;height:16px;border-radius:50%;border:4.5px solid #066afe;background:#fff"></div>
<div id="rm" class="t" style="left:1324.64px;top:645.10px;font-size:13px;color:#6b6b6b;font-weight:normal;letter-spacing:0.608px;">Medium</div>
<div class="abs" style="left:1301px;top:665.2px;width:16px;height:16px;border-radius:50%;border:1px solid #747474;background:#fff"></div>
<div id="rs" class="t" style="left:1325.44px;top:667.00px;font-size:13px;color:#6b6b6b;font-weight:normal;letter-spacing:0.200px;">Short</div>
<div class="abs" style="left:1301.4px;top:694.1px;width:191.4px;height:31.8px;border:1px solid #747474;border-radius:16px"></div>
<div id="ppo" class="t" style="left:1317.06px;top:702.82px;font-size:13.8px;color:#0b5cd5;font-weight:normal;letter-spacing:0.824px;-webkit-text-stroke:0.35px currentColor">Preview Prompt Output</div>
</body></html>
